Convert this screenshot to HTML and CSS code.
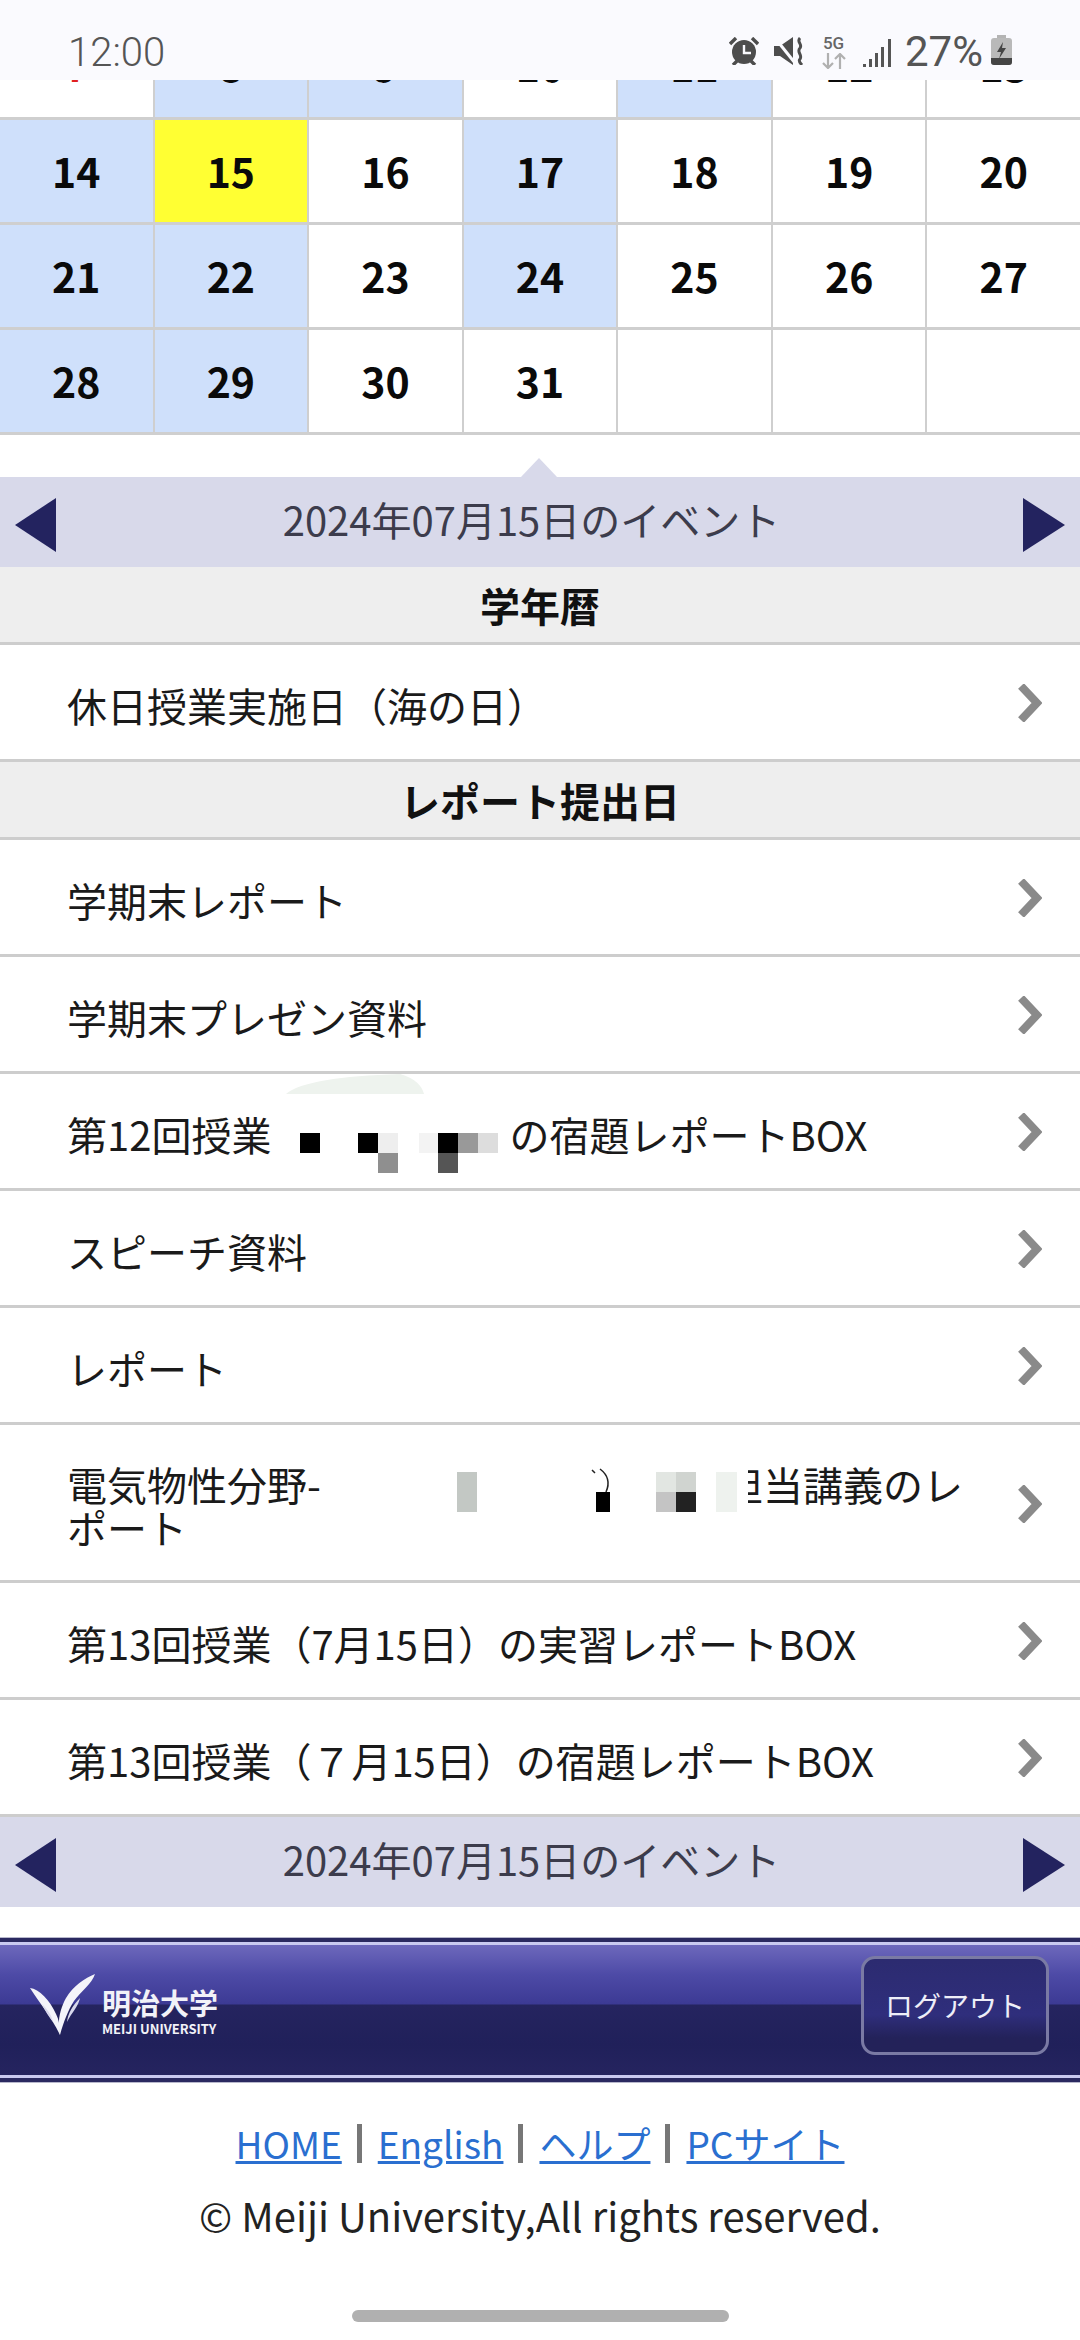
FILE: index.html
```html
<!DOCTYPE html>
<html lang="ja">

<head>
   <meta charset="utf-8" />
   <title>2024年07月15日のイベント</title>
   <meta name="viewport" content="width=device-width, initial-scale=1">
   <link rel="stylesheet" href="styles.css">
</head>

<body>
   <div class="status-bar">
      <span class="status-time">12:00</span>
      <div class="status-icons">
         <svg class="ico-alarm" width="30" height="28" viewBox="0 0 30 28">
            <circle cx="15" cy="15" r="12" fill="#4d4d4d" />
            <path d="M15 8V16H22" fill="none" stroke="#fafafe" stroke-width="2.4" />
            <path d="M1 7L7 1M29 7L23 1M8 24L4 28M22 24L26 28" stroke="#4d4d4d" stroke-width="3.4" fill="none" />
         </svg>
         <svg class="ico-mute" width="30" height="28" viewBox="0 0 30 28">
            <path d="M0 9H6L19 0V28L6 19H0Z" fill="#4d4d4d" />
            <path d="M1 1L21 26" stroke="#fafafe" stroke-width="3" />
            <path d="M26 1C22 5 29 7 26 11C22 15 29 18 26 22C24 24 26 26 28 28" fill="none" stroke="#4d4d4d" stroke-width="3" />
         </svg>
         <div class="ico-net">
            <span class="net-label">5G</span>
            <svg width="25" height="16" viewBox="0 0 25 16">
               <path d="M7 0V15M2 10L7 15L12 10" fill="none" stroke="#b0b0b0" stroke-width="2.2" />
               <path d="M19 16V1M14 6L19 1L24 6" fill="none" stroke="#b0b0b0" stroke-width="2.2" />
            </svg>
         </div>
         <svg class="ico-signal" width="28" height="28" viewBox="0 0 28 28">
            <path d="M0 25h3v3H0zM6 20h3v8H6zM12 14h3v14h-3zM18 8h3v20h-3zM25 0h3v28h-3z" fill="#555" />
         </svg>
         <span class="status-pct">27%</span>
         <svg class="ico-battery" width="21" height="30" viewBox="0 0 21 30">
            <rect x="6" y="0" width="9" height="4" fill="#b4b4b4" />
            <rect x="0" y="3" width="21" height="27" rx="3" fill="#b9b9b9" />
            <path d="M0 23H21V27Q21 30 18 30H3Q0 30 0 27Z" fill="#444" />
            <path d="M12 7L6 17H10L8 24L15 13H11Z" fill="#444" />
         </svg>
      </div>
   </div>

   <div class="cal">
      <div class="cell cell-cut"><span class="red">7</span></div>
      <div class="cell cell-cut has-event"><span>8</span></div>
      <div class="cell cell-cut has-event"><span>9</span></div>
      <div class="cell cell-cut"><span>10</span></div>
      <div class="cell cell-cut has-event"><span>11</span></div>
      <div class="cell cell-cut"><span>12</span></div>
      <div class="cell cell-cut"><span>13</span></div>

      <div class="cell has-event"><span>14</span></div>
      <div class="cell selected"><span>15</span></div>
      <div class="cell"><span>16</span></div>
      <div class="cell has-event"><span>17</span></div>
      <div class="cell"><span>18</span></div>
      <div class="cell"><span>19</span></div>
      <div class="cell"><span>20</span></div>

      <div class="cell has-event"><span>21</span></div>
      <div class="cell has-event"><span>22</span></div>
      <div class="cell"><span>23</span></div>
      <div class="cell has-event"><span>24</span></div>
      <div class="cell"><span>25</span></div>
      <div class="cell"><span>26</span></div>
      <div class="cell"><span>27</span></div>

      <div class="cell has-event"><span>28</span></div>
      <div class="cell has-event"><span>29</span></div>
      <div class="cell"><span>30</span></div>
      <div class="cell"><span>31</span></div>
      <div class="cell"></div>
      <div class="cell"></div>
      <div class="cell"></div>
   </div>

   <div class="day-band day-band-first">
      <svg class="band-arrow" width="41" height="54" viewBox="0 0 41 54"><path d="M41 0V54L0 27Z" /></svg>
      <span class="band-title">2024年07月15日のイベント</span>
      <svg class="band-arrow" width="42" height="54" viewBox="0 0 42 54"><path d="M0 0V54L42 27Z" /></svg>
   </div>

   <div class="sec-head">学年暦</div>
   <a class="ev-row">
      <span class="ev-text">休日授業実施日（海の日）</span>
      <svg class="chev" width="24" height="38" viewBox="0 0 24 38"><path d="M3 2L19 19L3 36" /></svg>
   </a>

   <div class="sec-head">レポート提出日</div>
   <a class="ev-row">
      <span class="ev-text">学期末レポート</span>
      <svg class="chev" width="24" height="38" viewBox="0 0 24 38"><path d="M3 2L19 19L3 36" /></svg>
   </a>
   <a class="ev-row">
      <span class="ev-text">学期末プレゼン資料</span>
      <svg class="chev" width="24" height="38" viewBox="0 0 24 38"><path d="M3 2L19 19L3 36" /></svg>
   </a>
   <a class="ev-row">
      <span class="ev-text">第12回授業<span class="gap-a"></span>の宿題レポートBOX</span>
      <svg class="chev" width="24" height="38" viewBox="0 0 24 38"><path d="M3 2L19 19L3 36" /></svg>
      <svg class="mosaic" width="1080" height="114" viewBox="0 0 1080 114">
         <path d="M286 20C300 8 340 2 400 0C415 4 422 12 424 20Z" fill="#eef3ee" />
         <rect x="300" y="59" width="20" height="20" fill="#000" />
         <rect x="358" y="59" width="20" height="20" fill="#000" />
         <rect x="378" y="59" width="20" height="20" fill="#eee" />
         <rect x="378" y="79" width="20" height="20" fill="#8f8f8f" />
         <rect x="419" y="59" width="20" height="20" fill="#f3f3f3" />
         <rect x="438" y="59" width="20" height="20" fill="#000" />
         <rect x="438" y="79" width="20" height="20" fill="#555" />
         <rect x="458" y="59" width="20" height="20" fill="#999" />
         <rect x="478" y="59" width="20" height="20" fill="#ddd" />
      </svg>
   </a>
   <a class="ev-row">
      <span class="ev-text">スピーチ資料</span>
      <svg class="chev" width="24" height="38" viewBox="0 0 24 38"><path d="M3 2L19 19L3 36" /></svg>
   </a>
   <a class="ev-row">
      <span class="ev-text">レポート</span>
      <svg class="chev" width="24" height="38" viewBox="0 0 24 38"><path d="M3 2L19 19L3 36" /></svg>
   </a>
   <a class="ev-row ev-row-tall">
      <span class="ev-text">電気物性分野-1<span class="gap-b"></span>担当講義のレポート</span>
      <svg class="chev" width="24" height="38" viewBox="0 0 24 38"><path d="M3 2L19 19L3 36" /></svg>
      <svg class="mosaic" width="1080" height="155" viewBox="0 0 1080 155">
         <rect x="323" y="25" width="425" height="70" fill="#fff" />
         <rect x="457" y="47" width="20" height="40" fill="#c3c8c4" />
         <path d="M592 45L595 48M600 44C608 50 610 58 606 67" fill="none" stroke="#222" stroke-width="1.5" />
         <rect x="596" y="67" width="14" height="20" fill="#000" />
         <rect x="656" y="47" width="20" height="20" fill="#e2e6e2" />
         <rect x="656" y="67" width="20" height="20" fill="#c4c4c4" />
         <rect x="676" y="47" width="20" height="20" fill="#d0d4d0" />
         <rect x="676" y="67" width="20" height="20" fill="#222" />
         <rect x="716" y="47" width="21" height="40" fill="#eef2ee" />
      </svg>
   </a>
   <a class="ev-row">
      <span class="ev-text">第13回授業（7月15日）の実習レポートBOX</span>
      <svg class="chev" width="24" height="38" viewBox="0 0 24 38"><path d="M3 2L19 19L3 36" /></svg>
   </a>
   <a class="ev-row">
      <span class="ev-text">第13回授業（７月15日）の宿題レポートBOX</span>
      <svg class="chev" width="24" height="38" viewBox="0 0 24 38"><path d="M3 2L19 19L3 36" /></svg>
   </a>

   <div class="day-band">
      <svg class="band-arrow" width="41" height="54" viewBox="0 0 41 54"><path d="M41 0V54L0 27Z" /></svg>
      <span class="band-title">2024年07月15日のイベント</span>
      <svg class="band-arrow" width="42" height="54" viewBox="0 0 42 54"><path d="M0 0V54L42 27Z" /></svg>
   </div>

   <div class="brand-bar">
      <div class="brand-inner">
         <div class="logo">
            <svg width="66" height="62" viewBox="0 0 66 62">
               <path d="M0 14C9 15 20 26 26 40C29 46 30 52 30 61C22 44 9 28 0 14Z" fill="#f4f4fa" />
               <path d="M65 0C62 10 51 17 44 27C38 36 33 50 30 61C27 48 30 35 36 24C43 12 55 4 65 0Z" fill="#f4f4fa" />
               <path d="M50 24C48 33 42 38 37 48C38 39 43 31 50 24ZM12 30C18 36 22 42 23 48C19 43 15 37 12 30Z" fill="#d8d8ec" />
            </svg>
            <div class="logo-text">
               <span class="logo-ja">明治大学</span>
               <span class="logo-en">MEIJI UNIVERSITY</span>
            </div>
         </div>
         <a class="logout-btn">ログアウト</a>
      </div>
   </div>

   <div class="site-foot">
      <div class="foot-links">
         <a class="foot-link">HOME</a>
         <a class="foot-link">English</a>
         <a class="foot-link">ヘルプ</a>
         <a class="foot-link">PCサイト</a>
      </div>
      <p class="copyright">© Meiji University,All rights reserved.</p>
   </div>

   <div class="home-pill"></div>
</body>

</html>
```

FILE: styles.css
```css
* {
   box-sizing: border-box
}

html,
body {
   margin: 0;
   padding: 0;
}

body {
   width: 1080px;
   height: 2340px;
   overflow: hidden;
   background: #fff;
   color: #111;
   font-family: "Noto Sans CJK JP", "Noto Sans", sans-serif;
   font-size: 40px;
}

/* status bar */
.status-bar {
   height: 80px;
   padding: 30px 68px 0 68px;
   background: #fafafe;
   display: flex;
   justify-content: space-between;
   align-items: flex-start;
   font-family: Roboto, sans-serif;
   color: #555;
}

.status-time {
   font-size: 40px;
   font-weight: 300;
   line-height: 46px;
}

.status-icons {
   display: flex;
   align-items: flex-start;
   margin-top: 7px;
}

.ico-mute {
   margin-left: 15px;
}

.ico-net {
   margin-left: 17px;
   margin-top: -2px;
   width: 25px;
   display: flex;
   flex-direction: column;
   align-items: center;
}

.net-label {
   font-size: 17px;
   line-height: 16px;
   font-weight: 500;
   color: #666;
   margin-bottom: 2px;
}

.ico-signal {
   margin-left: 17px;
   margin-top: 2px;
}

.status-pct {
   margin-left: 14px;
   margin-top: -9px;
   font-size: 42px;
   line-height: 48px;
   font-weight: 400;
}

.ico-battery {
   margin-left: 8px;
   margin-top: -2px;
}

/* calendar */
.cal {
   display: grid;
   grid-template-columns: repeat(7, 1fr);
   grid-template-rows: 37px 102px 102px 102px;
   column-gap: 2px;
   row-gap: 3px;
   background: #cfcfcf;
   border-bottom: 3px solid #cfcfcf;
}

.cell {
   background: #fff;
   display: flex;
   align-items: center;
   justify-content: center;
   padding-bottom: 2px;
   font-size: 41px;
   font-weight: 700;
   color: #0a0a0a;
   overflow: hidden;
}

.cell-cut {
   align-items: flex-end;
   padding-bottom: 23px;
}

.has-event {
   background: #cfe0fb;
}

.selected {
   background: #ffff33;
}

.red {
   color: #e02020;
}

/* date band */
.day-band {
   height: 90px;
   padding: 0 15px;
   background: #d8d9ea;
   display: flex;
   justify-content: space-between;
   align-items: center;
   position: relative;
}

.day-band-first {
   margin-top: 42px;
}

.day-band-first:before {
   content: "";
   position: absolute;
   left: 521px;
   top: -19px;
   border-left: 18px solid transparent;
   border-right: 18px solid transparent;
   border-bottom: 19px solid #d8d9ea;
}

.band-arrow {
   fill: #23235f;
   margin-top: 6px;
}

.band-title {
   font-size: 40px;
   line-height: 50px;
   color: #3c3c4c;
   margin: 0 16px 6px 0;
}

/* list */
.sec-head {
   height: 78px;
   background: #eeeeee;
   border-bottom: 3px solid #cdcdcd;
   display: flex;
   align-items: center;
   justify-content: center;
   font-weight: 700;
   color: #111;
}

.ev-row {
   height: 117px;
   padding: 0 38px 0 67px;
   border-bottom: 3px solid #cdcdcd;
   display: flex;
   align-items: center;
   gap: 28px;
   position: relative;
}

.ev-row-tall {
   height: 158px;
}

.ev-text {
   flex: 1;
   line-height: 43px;
   padding-top: 7px;
   color: #1a1a1a;
}

.gap-a {
   display: inline-block;
   width: 238px;
}

.gap-b {
   display: inline-block;
   width: 380px;
}

.chev {
   flex: none;
   margin-top: 2px;
}

.chev path {
   fill: none;
   stroke: #8a8a8a;
   stroke-width: 8;
}

.mosaic {
   position: absolute;
   left: 0;
   top: 0;
}

/* brand bar */
.brand-bar {
   margin-top: 31px;
   height: 144px;
   border-top: 4px solid #2a2960;
   border-bottom: 4px solid #2a2960;
   box-shadow: 0 -1px 0 #b8b8cc, 0 1px 0 #b8b8cc;
}

.brand-inner {
   height: 136px;
   padding: 0 31px 10px 30px;
   border-top: 3px solid #c9c9f0;
   border-bottom: 3px solid #c9c9f0;
   background: linear-gradient(#6d68bc 0, #4d4aa6 30px, #3c3a94 59px, #25245f 60px, #20205a 100px, #25245f 130px);
   display: flex;
   justify-content: space-between;
   align-items: center;
}

.logo {
   display: flex;
   align-items: flex-end;
   gap: 6px;
}

.logo-text {
   display: flex;
   flex-direction: column;
   color: #f2f2f8;
}

.logo-ja {
   font-size: 29px;
   line-height: 32px;
   font-weight: 700;
   margin-bottom: 3px;
}

.logo-en {
   font-size: 13px;
   line-height: 15px;
   font-weight: 700;
   white-space: nowrap;
}

.logout-btn {
   width: 188px;
   height: 99px;
   border: 3px solid #7a7aa4;
   border-radius: 14px;
   background: linear-gradient(#2c2b70 0, #2f2e7c 60%, #232259 85%);
   display: flex;
   align-items: center;
   justify-content: center;
   color: #eeeef8;
   font-size: 28px;
}

/* footer */
.site-foot {
   padding-top: 34px;
   text-align: center;
}

.foot-links {
   display: flex;
   justify-content: center;
   line-height: 54px;
}

.foot-link {
   font-size: 37px;
   color: #2a6fd0;
   text-decoration: underline;
   padding: 0 18px;
   position: relative;
}

.foot-link + .foot-link:before {
   content: "";
   position: absolute;
   left: -3px;
   top: 8px;
   width: 5px;
   height: 39px;
   background: #777;
}

.copyright {
   margin: 18px 0 0 0;
   font-size: 40px;
   line-height: 54px;
   color: #222;
}

.home-pill {
   width: 377px;
   height: 12px;
   margin: 68px auto 0 auto;
   border-radius: 6px;
   background: #b0b0b0;
}
```
